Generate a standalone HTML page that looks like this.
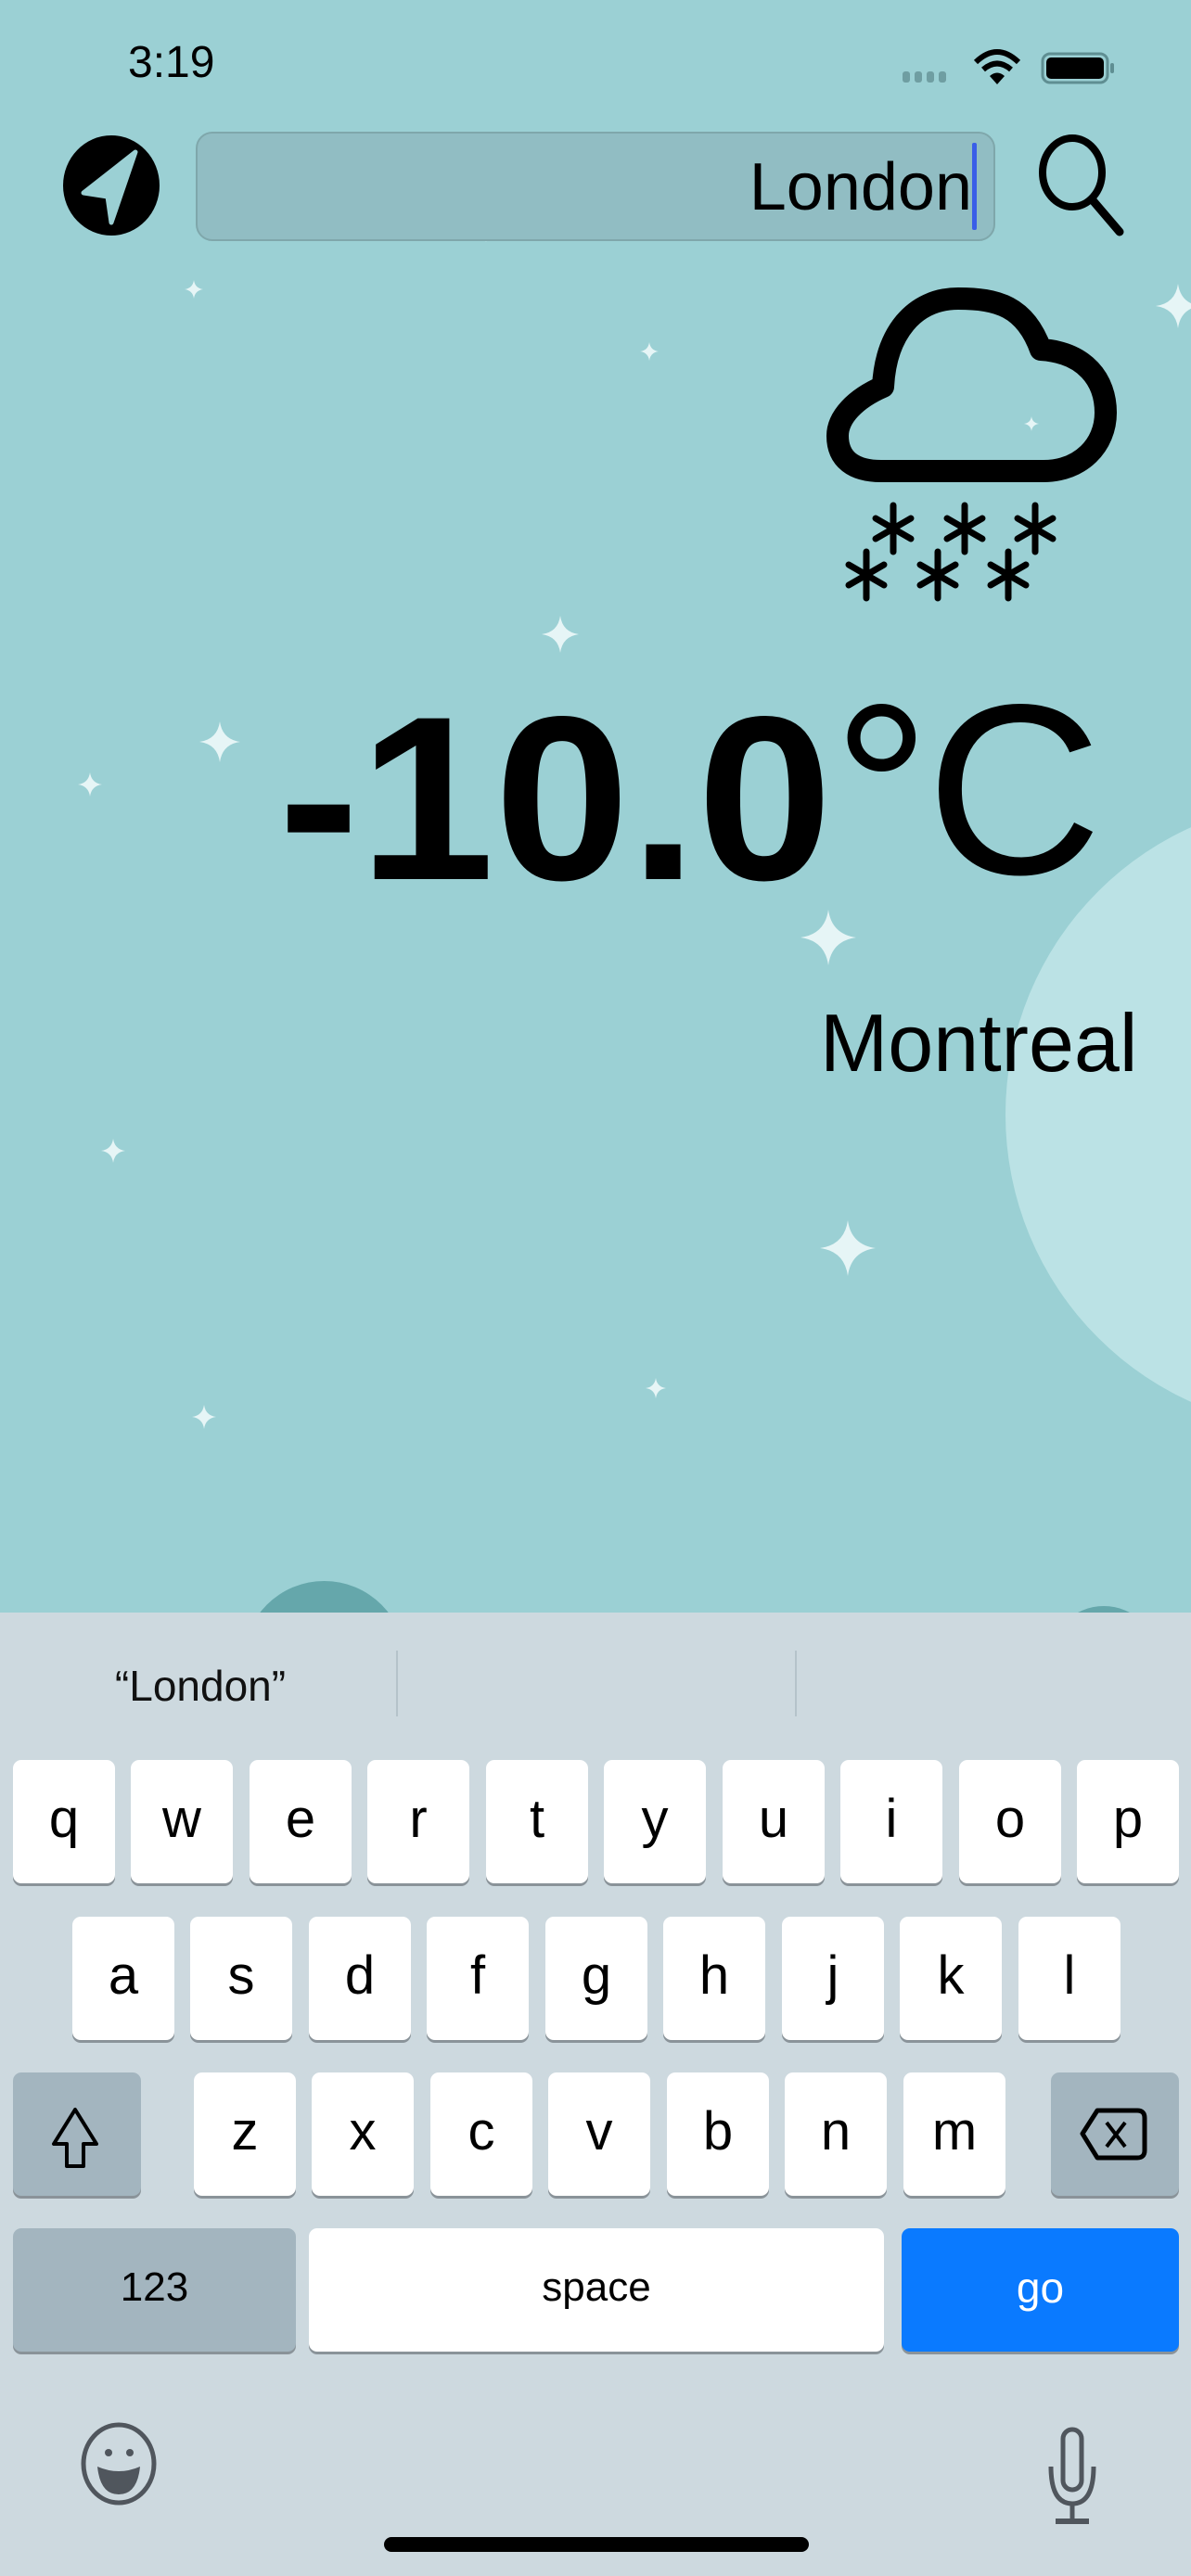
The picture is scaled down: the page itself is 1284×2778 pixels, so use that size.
<!DOCTYPE html>
<html><head><meta charset="utf-8"><style>
*{margin:0;padding:0;box-sizing:border-box}
body{width:1284px;height:2778px;overflow:hidden;background:#9bd0d4;position:relative;font-family:"Liberation Sans",sans-serif}
.a{position:absolute}
.k{position:absolute;width:110px;height:133px;background:#fff;border-radius:9px;box-shadow:0 3px 0 #8a9399;text-align:center;font-size:58px;line-height:128px;color:#000}
.s{background:#a3b5bf}
</style></head><body>
<div class="a" style="left:1084px;top:862px;width:680px;height:680px;border-radius:50%;background:#bbe2e5"></div>
<div class="a" style="left:262px;top:1705px;width:175px;height:175px;border-radius:50%;background:#65a7ab"></div>
<div class="a" style="left:1130px;top:1732px;width:120px;height:120px;border-radius:50%;background:#65a7ab"></div>
<svg class="a" style="left:0;top:0" width="1284" height="1740">
<defs><path id="sp" d="M0,-1 Q0.12,-0.12 1,0 Q0.12,0.12 0,1 Q-0.12,0.12 -1,0 Q-0.12,-0.12 0,-1Z"/></defs>
<g fill="#e6f5f6">
<use href="#sp" transform="translate(962,160) scale(10)"/>
<use href="#sp" transform="translate(524,253) scale(8)"/>
<use href="#sp" transform="translate(209,312) scale(10)"/>
<use href="#sp" transform="translate(700,379) scale(10)"/>
<use href="#sp" transform="translate(1270,330) scale(24)"/>
<use href="#sp" transform="translate(1112,457) scale(8)"/>
<use href="#sp" transform="translate(604,684) scale(20)"/>
<use href="#sp" transform="translate(237,800) scale(22)"/>
<use href="#sp" transform="translate(97,846) scale(13)"/>
<use href="#sp" transform="translate(893,1011) scale(30)"/>
<use href="#sp" transform="translate(122,1241) scale(13)"/>
<use href="#sp" transform="translate(914,1346) scale(30)"/>
<use href="#sp" transform="translate(220,1528) scale(13)"/>
<use href="#sp" transform="translate(707,1497) scale(11)"/>
</g>
<!-- cloud -->
<path d="M950,508 L1125,508 C1165,508 1192,480 1192,445 C1192,410 1170,380 1122,377 C1105,330 1075,322 1033,322 C985,322 955,360 952,417 C922,430 903,450 903,470 C903,495 920,508 950,508Z" fill="none" stroke="#000" stroke-width="24" stroke-linejoin="round"/>
<g stroke="#000" stroke-width="7" stroke-linecap="round">
<g transform="translate(963,570)"><line x1="0" y1="-25" x2="0" y2="25"/><line x1="-19" y1="-11" x2="19" y2="11"/><line x1="-19" y1="11" x2="19" y2="-11"/></g>
<g transform="translate(1040,570)"><line x1="0" y1="-25" x2="0" y2="25"/><line x1="-19" y1="-11" x2="19" y2="11"/><line x1="-19" y1="11" x2="19" y2="-11"/></g>
<g transform="translate(1116,570)"><line x1="0" y1="-25" x2="0" y2="25"/><line x1="-19" y1="-11" x2="19" y2="11"/><line x1="-19" y1="11" x2="19" y2="-11"/></g>
<g transform="translate(934,620)"><line x1="0" y1="-25" x2="0" y2="25"/><line x1="-19" y1="-11" x2="19" y2="11"/><line x1="-19" y1="11" x2="19" y2="-11"/></g>
<g transform="translate(1011,620)"><line x1="0" y1="-25" x2="0" y2="25"/><line x1="-19" y1="-11" x2="19" y2="11"/><line x1="-19" y1="11" x2="19" y2="-11"/></g>
<g transform="translate(1087,620)"><line x1="0" y1="-25" x2="0" y2="25"/><line x1="-19" y1="-11" x2="19" y2="11"/><line x1="-19" y1="11" x2="19" y2="-11"/></g>
</g>
<!-- location -->
<ellipse cx="120" cy="200" rx="52" ry="54" fill="#000"/>
<path d="M146,164 L90,208 L116,212 L120,240 Z" fill="#9bd0d4" stroke="#9bd0d4" stroke-width="5" stroke-linejoin="round"/>
<!-- search -->
<ellipse cx="1156" cy="186" rx="32" ry="37" fill="none" stroke="#000" stroke-width="8"/>
<line x1="1178" y1="216" x2="1207" y2="250" stroke="#000" stroke-width="9" stroke-linecap="round"/>
<!-- status -->
<g fill="#6f9ea2"><rect x="973" y="77" width="8" height="12" rx="3"/><rect x="986" y="77" width="8" height="12" rx="3"/><rect x="999" y="77" width="8" height="12" rx="3"/><rect x="1012" y="77" width="8" height="12" rx="3"/></g>
<path d="M1052,67 Q1075,45 1098,67" fill="none" stroke="#000" stroke-width="6"/>
<path d="M1060,75 Q1075,62 1090,75" fill="none" stroke="#000" stroke-width="6"/>
<path d="M1067,82 L1075,91 L1083,82 Q1075,75 1067,82Z" fill="#000"/>
<rect x="1124" y="58" width="70" height="31" rx="8" fill="none" stroke="#5f8e92" stroke-width="3"/>
<rect x="1128" y="62" width="62" height="23" rx="5" fill="#000"/>
<rect x="1197" y="68" width="4" height="11" rx="2" fill="#5f8e92"/>
</svg>
<div class="a" style="left:138px;top:40px;font-size:48px;">3:19</div>
<div class="a" style="left:211px;top:142px;width:862px;height:118px;background:#91bdc3;border:2px solid #7fa7ab;border-radius:18px"></div>
<div class="a" style="left:700px;top:152px;width:348px;text-align:right;font-size:72px;line-height:100px">London</div>
<div class="a" style="left:1048px;top:154px;width:5px;height:94px;background:#3a5ee8;border-radius:2px"></div>
<div class="a" style="left:300px;top:712px;font-size:252px;font-weight:bold;line-height:300px;transform:scaleX(1.04);transform-origin:left">-10.0</div>
<div class="a" style="left:898px;top:702px;font-size:262px;font-weight:normal;line-height:300px;letter-spacing:-4px">°C</div>
<div class="a" style="left:884px;top:1075px;font-size:88px;line-height:100px">Montreal</div>
<!-- keyboard -->
<div class="a" style="left:0;top:1739px;width:1284px;height:1039px;background:#cdd9df"></div>
<div class="a" style="left:96px;top:1788px;width:240px;text-align:center;font-size:46px;line-height:60px;color:#111">“London”</div>
<div class="a" style="left:427px;top:1780px;width:2px;height:71px;background:#b5c3ca"></div>
<div class="a" style="left:857px;top:1780px;width:2px;height:71px;background:#b5c3ca"></div>
<div class="k" style="left:14px;top:1898px">q</div><div class="k" style="left:141px;top:1898px">w</div><div class="k" style="left:269px;top:1898px">e</div><div class="k" style="left:396px;top:1898px">r</div><div class="k" style="left:524px;top:1898px">t</div><div class="k" style="left:651px;top:1898px">y</div><div class="k" style="left:779px;top:1898px">u</div><div class="k" style="left:906px;top:1898px">i</div><div class="k" style="left:1034px;top:1898px">o</div><div class="k" style="left:1161px;top:1898px">p</div>
<div class="k" style="left:78px;top:2067px">a</div><div class="k" style="left:205px;top:2067px">s</div><div class="k" style="left:333px;top:2067px">d</div><div class="k" style="left:460px;top:2067px">f</div><div class="k" style="left:588px;top:2067px">g</div><div class="k" style="left:715px;top:2067px">h</div><div class="k" style="left:843px;top:2067px">j</div><div class="k" style="left:970px;top:2067px">k</div><div class="k" style="left:1098px;top:2067px">l</div>
<div class="k s" style="left:14px;top:2235px;width:138px"></div>
<div class="k" style="left:209px;top:2235px">z</div><div class="k" style="left:336px;top:2235px">x</div><div class="k" style="left:464px;top:2235px">c</div><div class="k" style="left:591px;top:2235px">v</div><div class="k" style="left:719px;top:2235px">b</div><div class="k" style="left:846px;top:2235px">n</div><div class="k" style="left:974px;top:2235px">m</div>
<div class="k s" style="left:1133px;top:2235px;width:138px"></div>
<div class="k s" style="left:14px;top:2403px;width:305px;font-size:44px">123</div>
<div class="k" style="left:333px;top:2403px;width:620px;font-size:44px">space</div>
<div class="k" style="left:972px;top:2403px;width:299px;background:#0a7aff;color:#fff;font-size:46px">go</div>
<svg class="a" style="left:0;top:2200px" width="1284" height="578">
<path d="M81,75 L58,112 L72,112 L72,136 L90,136 L90,112 L104,112 Z" fill="none" stroke="#000" stroke-width="4" stroke-linejoin="round"/>
<path d="M1183,76 L1226,76 Q1234,76 1234,84 L1234,119 Q1234,127 1226,127 L1183,127 L1167,101 Z" fill="none" stroke="#000" stroke-width="5" stroke-linejoin="round"/>
<path d="M1193,89 L1213,115 M1213,89 L1193,115" stroke="#000" stroke-width="4"/>
<ellipse cx="128" cy="457" rx="38" ry="42" fill="none" stroke="#50565d" stroke-width="5"/>
<circle cx="117" cy="445" r="4" fill="#50565d"/><circle cx="140" cy="445" r="4" fill="#50565d"/>
<path d="M105,460 Q128,470 151,460 Q148,490 128,490 Q108,490 105,460Z" fill="#50565d"/>
<rect x="1146" y="420" width="20" height="65" rx="10" fill="none" stroke="#50565d" stroke-width="5"/>
<path d="M1133,460 Q1133,500 1156,500 Q1179,500 1179,460" fill="none" stroke="#50565d" stroke-width="5"/>
<line x1="1156" y1="500" x2="1156" y2="518" stroke="#50565d" stroke-width="5"/>
<line x1="1138" y1="519" x2="1174" y2="519" stroke="#50565d" stroke-width="6"/>
<rect x="414" y="536" width="458" height="16" rx="8" fill="#000"/>
</svg>
</body></html>
